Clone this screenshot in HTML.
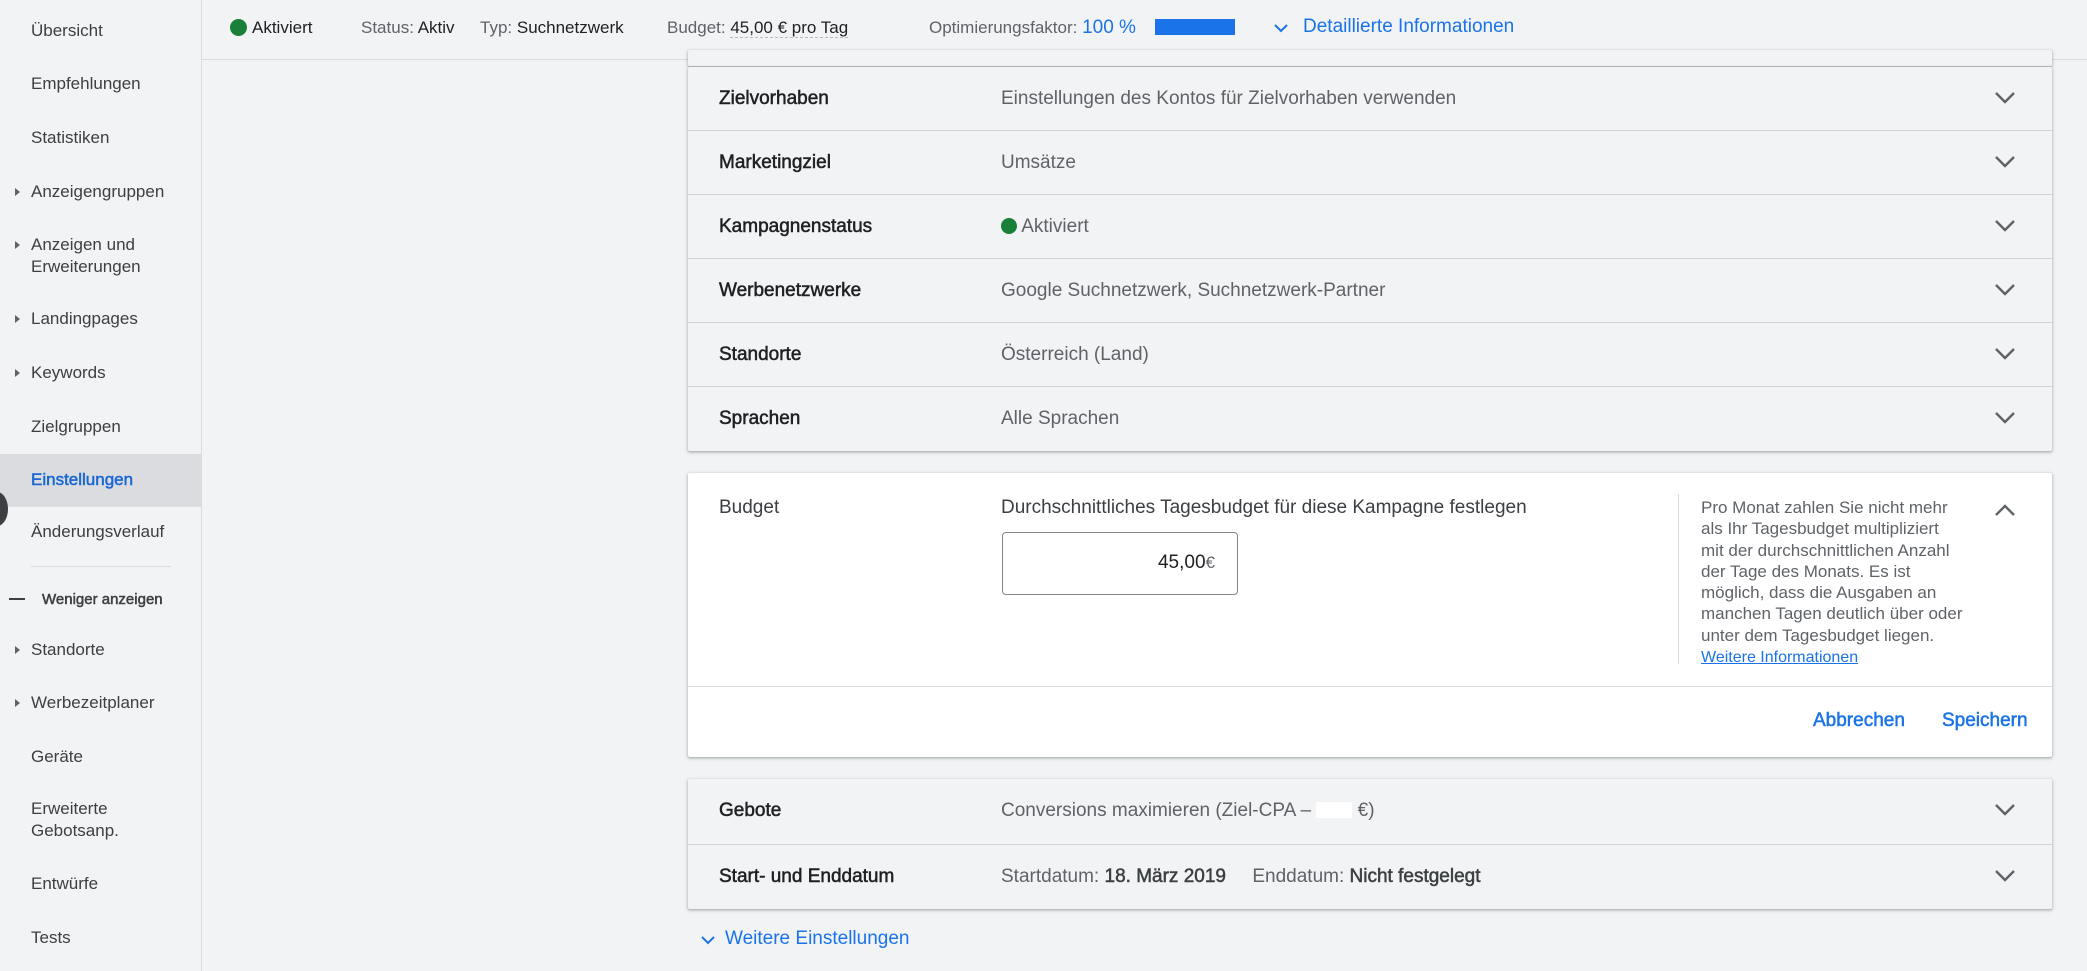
<!DOCTYPE html>
<html><head><meta charset="utf-8"><style>
*{box-sizing:border-box;margin:0;padding:0}
body{width:2087px;height:971px;overflow:hidden;background:#f1f3f4;font-family:"Liberation Sans",Arial,sans-serif;color:#3c4043;position:relative}
.side{position:absolute;left:0;top:0;width:202px;height:971px;border-right:1px solid #dadce0;background:#f1f3f4}
.si{position:absolute;left:31px;font-size:17px;color:#3c4043;line-height:22px}
.tri{position:absolute;left:15px;width:0;height:0;border-top:4px solid transparent;border-bottom:4px solid transparent;border-left:5px solid #5f6368}
.top{position:absolute;left:202px;top:0;right:0;height:60px;border-bottom:1px solid #dadce0;background:#f1f3f4}
.tt{position:absolute;top:17px;font-size:17px;line-height:22px;color:#5f6368}
.tt b{font-weight:normal;color:#202124}
.card{position:absolute;left:688px;width:1364px;background:#f1f3f4;box-shadow:0 1px 2px rgba(60,64,67,.3),0 1px 3px 1px rgba(60,64,67,.15);border-radius:2px}
.row{position:absolute;left:0;right:0;height:64px;border-bottom:1px solid #d0d3d6}
.lab{position:absolute;left:31px;top:21px;font-size:19px;color:#202124;-webkit-text-stroke:0.5px #202124}
.val{position:absolute;left:313px;top:21px;font-size:19px;color:#5f6368}
.chev{position:absolute;right:36px;top:24px;width:22px;height:14px}
.blue{color:#1a73e8}
.med{-webkit-text-stroke:0.5px currentColor}
</style></head><body>
<div class="side">
<div class="si" style="top:20px">Übersicht</div>
<div class="si" style="top:73px">Empfehlungen</div>
<div class="si" style="top:127px">Statistiken</div>
<div class="tri" style="top:188px"></div><div class="si" style="top:181px">Anzeigengruppen</div>
<div class="tri" style="top:241px"></div><div class="si" style="top:234px">Anzeigen und<br>Erweiterungen</div>
<div class="tri" style="top:315px"></div><div class="si" style="top:308px">Landingpages</div>
<div class="tri" style="top:369px"></div><div class="si" style="top:362px">Keywords</div>
<div class="si" style="top:416px">Zielgruppen</div>
<div style="position:absolute;left:0;top:454px;width:201px;height:53px;background:#dadce0"></div>
<div class="si med" style="top:469px;color:#1967d2">Einstellungen</div>
<div style="position:absolute;left:-14px;top:492px;width:22px;height:34px;border-radius:50%;background:#3c4043"></div>
<div class="si" style="top:521px">Änderungsverlauf</div>
<div style="position:absolute;left:31px;top:566px;width:140px;border-top:1px solid #dadce0"></div>
<div style="position:absolute;left:9px;top:598px;width:16px;border-top:2px solid #3c4043"></div>
<div class="si med" style="top:589px;left:42px;font-size:15px">Weniger anzeigen</div>
<div class="tri" style="top:646px"></div><div class="si" style="top:639px">Standorte</div>
<div class="tri" style="top:699px"></div><div class="si" style="top:692px">Werbezeitplaner</div>
<div class="si" style="top:746px">Geräte</div>
<div class="si" style="top:798px">Erweiterte<br>Gebotsanp.</div>
<div class="si" style="top:873px">Entwürfe</div>
<div class="si" style="top:927px">Tests</div>
</div>
<div class="top">
<div style="position:absolute;left:28px;top:19px;width:17px;height:17px;border-radius:50%;background:#188038"></div>
<div class="tt" style="left:50px"><b>Aktiviert</b></div>
<div class="tt" style="left:159px">Status: <b>Aktiv</b></div>
<div class="tt" style="left:278px">Typ: <b>Suchnetzwerk</b></div>
<div class="tt" style="left:465px">Budget: <b style="border-bottom:1px dashed #bbb">45,00 € pro Tag</b></div>
<div class="tt" style="left:727px">Optimierungsfaktor: <span class="blue" style="font-size:19px">100 %</span></div>
<div style="position:absolute;left:953px;top:19px;width:80px;height:16px;background:#1a73e8"></div>
<svg style="position:absolute;left:1071px;top:23px" width="16" height="11"><path d="M2 2l6 6 6-6" stroke="#1a73e8" stroke-width="2" fill="none"/></svg>
<div class="tt blue" style="left:1101px;font-size:19px;top:16px">Detaillierte Informationen</div>
</div>
<div class="card" style="top:50px;height:16px"></div>
<div class="card" style="top:67px;height:384px">
<div class="row" style="top:0"><div class="lab">Zielvorhaben</div><div class="val">Einstellungen des Kontos für Zielvorhaben verwenden</div><svg class="chev"><path d="M2 2l9 9 9-9" stroke="#5f6368" stroke-width="2.4" fill="none"/></svg></div>
<div class="row" style="top:64px"><div class="lab">Marketingziel</div><div class="val">Umsätze</div><svg class="chev"><path d="M2 2l9 9 9-9" stroke="#5f6368" stroke-width="2.4" fill="none"/></svg></div>
<div class="row" style="top:128px"><div class="lab">Kampagnenstatus</div><div class="val"><span style="display:inline-block;width:16px;height:16px;border-radius:50%;background:#188038;vertical-align:-2px"></span> Aktiviert</div><svg class="chev"><path d="M2 2l9 9 9-9" stroke="#5f6368" stroke-width="2.4" fill="none"/></svg></div>
<div class="row" style="top:192px"><div class="lab">Werbenetzwerke</div><div class="val">Google Suchnetzwerk, Suchnetzwerk-Partner</div><svg class="chev"><path d="M2 2l9 9 9-9" stroke="#5f6368" stroke-width="2.4" fill="none"/></svg></div>
<div class="row" style="top:256px"><div class="lab">Standorte</div><div class="val">Österreich (Land)</div><svg class="chev"><path d="M2 2l9 9 9-9" stroke="#5f6368" stroke-width="2.4" fill="none"/></svg></div>
<div class="row" style="top:320px;border:0"><div class="lab">Sprachen</div><div class="val">Alle Sprachen</div><svg class="chev"><path d="M2 2l9 9 9-9" stroke="#5f6368" stroke-width="2.4" fill="none"/></svg></div>
</div>
<div class="card" style="top:473px;height:284px;background:#fff">
<div class="lab" style="top:24px;-webkit-text-stroke:0;color:#3c4043">Budget</div>
<div class="val" style="top:24px;color:#3c4043">Durchschnittliches Tagesbudget für diese Kampagne festlegen</div>
<div style="position:absolute;left:314px;top:59px;width:236px;height:63px;border:1px solid #80868b;border-radius:4px;font-size:19px;text-align:right;padding:19px 22px 0 0;color:#202124">45,00<span style="color:#5f6368;font-size:17px">€</span></div>
<div style="position:absolute;left:990px;top:21px;height:170px;border-left:1px solid #dadce0"></div>
<div style="position:absolute;left:1013px;top:24px;width:262px;font-size:17px;line-height:21.3px;color:#5f6368">Pro Monat zahlen Sie nicht mehr als Ihr Tagesbudget multipliziert mit der durchschnittlichen Anzahl der Tage des Monats. Es ist möglich, dass die Ausgaben an manchen Tagen deutlich über oder unter dem Tagesbudget liegen.<br><span class="blue" style="text-decoration:underline;font-size:16px">Weitere Informationen</span></div>
<svg class="chev" style="top:30px"><path d="M2 12l9-9 9 9" stroke="#5f6368" stroke-width="2.4" fill="none"/></svg>
<div style="position:absolute;left:0;right:0;top:213px;border-top:1px solid #dadce0"></div>
<div class="blue med" style="position:absolute;left:1125px;top:237px;font-size:19px">Abbrechen</div>
<div class="blue med" style="position:absolute;left:1254px;top:237px;font-size:19px">Speichern</div>
</div>
<div class="card" style="top:779px;height:130px">
<div class="row" style="top:0;height:66px"><div class="lab">Gebote</div><div class="val">Conversions maximieren (Ziel-CPA – <span style="display:inline-block;width:36px;height:16px;background:#fff;vertical-align:-2px"></span> €)</div><svg class="chev"><path d="M2 2l9 9 9-9" stroke="#5f6368" stroke-width="2.4" fill="none"/></svg></div>
<div class="row" style="top:66px;border:0"><div class="lab">Start- und Enddatum</div><div class="val">Startdatum: <span class="med" style="color:#3c4043">18. März 2019</span>&nbsp;&nbsp;&nbsp;&nbsp;&nbsp;Enddatum: <span class="med" style="color:#3c4043">Nicht festgelegt</span></div><svg class="chev"><path d="M2 2l9 9 9-9" stroke="#5f6368" stroke-width="2.4" fill="none"/></svg></div>
</div>
<svg style="position:absolute;left:700px;top:935px" width="16" height="11"><path d="M2 2l6 6 6-6" stroke="#1a73e8" stroke-width="2" fill="none"/></svg>
<div class="blue" style="position:absolute;left:725px;top:928px;font-size:19px">Weitere Einstellungen</div>
</body></html>
